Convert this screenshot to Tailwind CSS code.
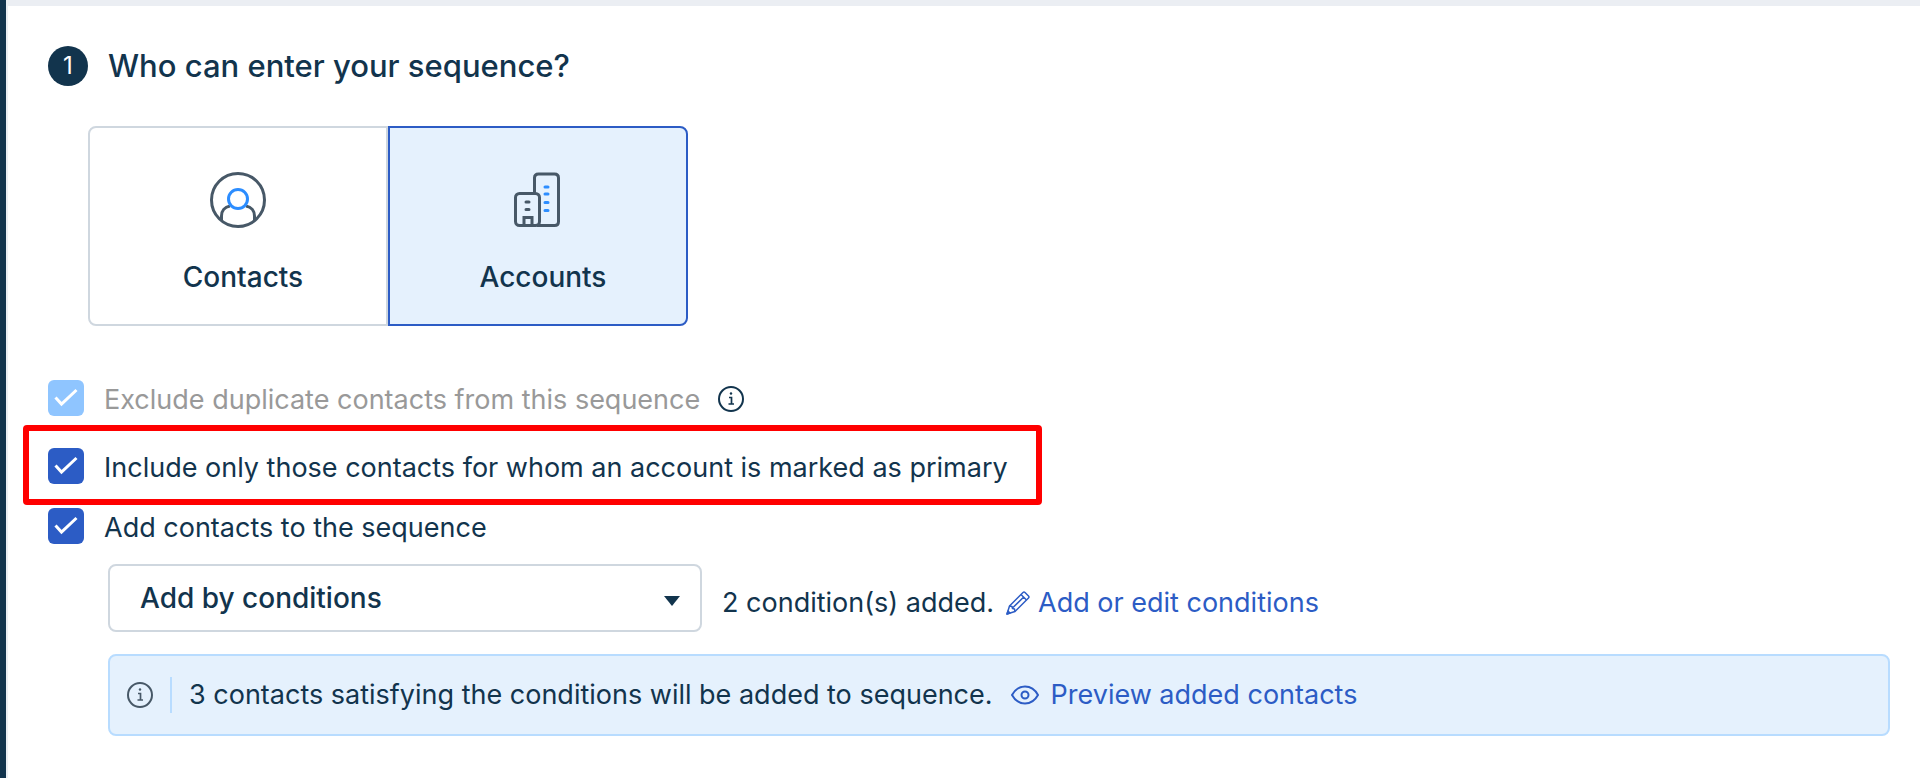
<!DOCTYPE html>
<html lang="en">
<head>
  <meta charset="UTF-8">
  <meta name="viewport" content="width=device-width, initial-scale=1">
  <title>Sequence settings</title>
  <script src="https://cdn.jsdelivr.net/npm/@tailwindcss/browser@4"></script>
</head>
<body class="min-h-screen flex bg-white text-[#12344d] text-[27px] leading-10 font-['Inter',sans-serif]">
  <!-- Edge of the side navigation -->
  <div class="w-2 shrink-0 bg-[#12344d] border-r-2 border-[#ebeff3]"></div>

  <main class="flex-1 border-t-6 border-[#ebeef3] pl-10 pr-[30px] pt-10 pb-10">
    <!-- Step title -->
    <div class="flex items-center gap-5">
      <span class="size-10 rounded-full bg-[#12344d] text-white text-2xl flex items-center justify-center">1</span>
      <h1 class="text-[31px] leading-10 font-medium">Who can enter your sequence?</h1>
    </div>

    <!-- Record type -->
    <div class="flex ml-10 mt-10">
      <button type="button" class="w-[300px] h-[200px] border-2 border-[#cfd7df] rounded-l-lg flex flex-col items-center pt-11">
        <svg class="size-14" viewBox="0 0 56 56" fill="none" stroke="#475867" stroke-width="3">
          <circle cx="28" cy="28" r="26.5"/>
          <path d="M11.500 48v-4c0-5 3-9 8.500-10M44.500 48v-4c0-5-3-9-8.500-10"/>
          <circle cx="28" cy="27" r="9.500" stroke="#2c8dff"/>
        </svg>
        <span class="mt-[29px] pl-2.5 text-[28px] leading-10 font-medium">Contacts</span>
      </button>
      <button type="button" class="w-[300px] h-[200px] border-2 border-[#2c5cc5] bg-[#e5f1fd] rounded-r-lg flex flex-col items-center pt-11">
        <svg class="size-14" viewBox="0 0 56 56" fill="none" stroke="#475867" stroke-width="3">
          <path d="M24.500 20V6q0-4 4-4h16q4 0 4 4v43.500q0 4-4 4H27"/>
          <rect x="5.500" y="21.500" width="24" height="32" rx="4"/>
          <path d="M14 53.500v-8h8v8"/>
          <path d="M16 30h3M16 37.500h3" stroke-linecap="round"/>
          <path d="M35 15h3M35 22h3M35 30.500h3M35 38.500h3" stroke="#2c8dff" stroke-linecap="round"/>
        </svg>
        <span class="mt-[29px] pl-2.5 text-[28px] leading-10 font-medium">Accounts</span>
      </button>
    </div>

    <!-- Options -->
    <div class="flex items-start mt-[54px]">
      <label class="flex items-start gap-5 text-[#999]">
        <span class="relative size-9 shrink-0">
          <input type="checkbox" checked disabled class="block size-9 appearance-none rounded-md bg-[#8fc5ff]">
          <svg class="absolute inset-0 size-9 pointer-events-none" viewBox="0 0 36 36" fill="none" stroke="#fff" stroke-width="3"><path d="M7.500 17.500l6 6.500L28.500 10"/></svg>
        </span>
        Exclude duplicate contacts from this sequence
      </label>
      <button type="button" aria-label="About duplicates" class="ml-[18px] mt-1.5">
        <svg class="size-[26px]" viewBox="0 0 26 26" fill="none" stroke="currentColor" stroke-width="2">
          <circle cx="13" cy="13" r="12"/>
          <path d="M11 11.500h2.500v6M10.500 18h5.500" stroke-width="1.700"/>
          <circle cx="13" cy="7.500" r="1.200" fill="currentColor" stroke="none"/>
        </svg>
      </button>
    </div>

    <div class="w-fit -ml-[25px] mt-[5px] border-6 border-[#f00] rounded-sm pl-[19px] pr-7 pt-[17px] pb-[11px]">
      <label class="flex items-start gap-5">
        <span class="relative size-9 shrink-0">
          <input type="checkbox" checked class="block size-9 appearance-none rounded-md bg-[#2c5cc5]">
          <svg class="absolute inset-0 size-9 pointer-events-none" viewBox="0 0 36 36" fill="none" stroke="#fff" stroke-width="3"><path d="M7.500 17.500l6 6.500L28.500 10"/></svg>
        </span>
        Include only those contacts for whom an account is marked as primary
      </label>
    </div>

    <label class="flex w-fit items-start gap-5 mt-[3px]">
      <span class="relative size-9 shrink-0">
        <input type="checkbox" checked class="block size-9 appearance-none rounded-md bg-[#2c5cc5]">
        <svg class="absolute inset-0 size-9 pointer-events-none" viewBox="0 0 36 36" fill="none" stroke="#fff" stroke-width="3"><path d="M7.500 17.500l6 6.500L28.500 10"/></svg>
      </span>
      Add contacts to the sequence
    </label>

    <div class="ml-15 mt-4 flex items-center gap-5">
      <div class="relative w-[594px]">
        <select aria-label="How contacts are added" class="block w-full h-[68px] appearance-none border-2 border-[#cfd7df] rounded-lg bg-white pl-[30px] pr-14 text-[28px] font-medium">
          <option>Add by conditions</option>
        </select>
        <svg class="absolute right-[22px] top-8 w-4 h-2.5 pointer-events-none" viewBox="0 0 16 10" fill="#12344d"><path d="M0 0h16L8 10z"/></svg>
      </div>
      <p class="flex items-center pt-2.5">
        2 condition(s) added.
        <a href="#" class="flex items-center gap-2 ml-3 text-[#2c5cc5]">
          <svg class="size-6" viewBox="0 0 24 24" fill="none" stroke="currentColor" stroke-width="1.500" stroke-linejoin="round">
            <path d="M1 23l2.500-8L17 1.500q1-1 2 0L22.500 5q1 1 0 2L9 20.500z"/>
            <path d="M3.500 15l2.500.5.500 2 2 .5.500 2.500M15 3.500l5.500 5.500M7 16.500L18 5.800M1 23l3-1-2-2z"/>
          </svg>
          Add or edit conditions
        </a>
      </p>
    </div>

    <!-- Result banner -->
    <div class="ml-15 mt-[22px] h-[82px] flex items-center border-2 border-[#b8dcff] rounded-lg bg-[#e5f1fd] pl-[17px]">
      <svg class="size-[26px]" viewBox="0 0 26 26" fill="none" stroke="#475867" stroke-width="2">
        <circle cx="13" cy="13" r="12"/>
        <path d="M11 11.500h2.500v6M10.500 18h5.500" stroke-width="1.700"/>
        <circle cx="13" cy="7.500" r="1.200" fill="#475867" stroke="none"/>
      </svg>
      <p class="ml-[17px] h-9 flex items-center border-l-2 border-[#b8dcff] pl-[17px]">
        3 contacts satisfying the conditions will be added to sequence.
        <a href="#" class="flex items-center gap-3 ml-[18px] text-[#2c5cc5]">
          <svg class="w-7 h-5" viewBox="0 0 28 20" fill="none" stroke="currentColor" stroke-width="2">
            <path d="M1 10C4 4.500 8.500 1.500 14 1.500S24 4.500 27 10c-3 5.500-7.500 8.500-13 8.500S4 15.500 1 10z"/>
            <circle cx="14" cy="10" r="3.500"/>
          </svg>
          Preview added contacts
        </a>
      </p>
    </div>
  </main>
</body>
</html>
